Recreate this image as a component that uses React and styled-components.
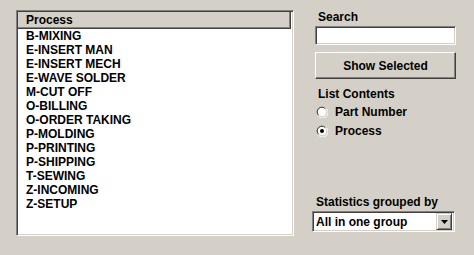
import React from "react";
import styled, { createGlobalStyle } from "styled-components";

const GlobalStyle = createGlobalStyle`
  html, body {
    margin: 0;
    padding: 0;
    background: #d4d0c8;
  }
  body {
    font-family: "Liberation Sans", Arial, sans-serif;
    font-size: 12px;
    font-weight: bold;
    color: #000;
  }
`;

const processes = [
  "B-MIXING",
  "E-INSERT MAN",
  "E-INSERT MECH",
  "E-WAVE SOLDER",
  "M-CUT OFF",
  "O-BILLING",
  "O-ORDER TAKING",
  "P-MOLDING",
  "P-PRINTING",
  "P-SHIPPING",
  "T-SEWING",
  "Z-INCOMING",
  "Z-SETUP",
];

export default function App() {
  return (
    <>
      <GlobalStyle />
      <Window>
        <ListBox>
          <ColumnHeader>Process</ColumnHeader>
          {processes.map((p) => (
            <Row key={p}>{p}</Row>
          ))}
        </ListBox>

        <Side>
          <Label $indent={6}>Search</Label>
          <TextBox />
          <Button>Show Selected</Button>

          <Label $indent={6} $top={8}>List Contents</Label>
          <RadioGroup>
            <Radio label="Part Number" />
            <Radio label="Process" checked />
          </RadioGroup>

          <Spacer />
          <Label $indent={4}>Statistics grouped by</Label>
          <Select>
            <SelectText>All in one group</SelectText>
            <ArrowButton>
              <svg width="7" height="4" viewBox="0 0 7 4">
                <path d="M0 0h7L3.5 4z" fill="#000" />
              </svg>
            </ArrowButton>
          </Select>
        </Side>
      </Window>
    </>
  );
}

function Radio({ label, checked }) {
  return (
    <RadioRow>
      <svg width="12" height="12" viewBox="0 0 12 12">
        <path d="M8 1.5A5 5 0 0 0 1.5 8" stroke="#808080" strokeWidth="1" fill="none" />
        <circle cx="6" cy="6" r="4.5" fill="#fff" />
        <path d="M9.2 2.6A4.2 4.2 0 0 0 2.6 9.2" stroke="#404040" strokeWidth="1" fill="none" />
        <path d="M2.8 10.4A5 5 0 0 0 10.4 2.8" stroke="#fff" strokeWidth="1" fill="none" />
        <path d="M3.4 9.6A4.2 4.2 0 0 0 9.6 3.4" stroke="#d4d0c8" strokeWidth="1" fill="none" />
        {checked && <circle cx="6" cy="6" r="2" fill="#000" />}
      </svg>
      <span>{label}</span>
    </RadioRow>
  );
}

// Styled Components
const Window = styled.div`
  width: 474px;
  height: 255px;
  display: flex;
  padding: 10px 0 0 16px;
  box-sizing: border-box;
  background: #d4d0c8;
  overflow: hidden;
`;

const ListBox = styled.div`
  width: 278px;
  height: 226px;
  box-sizing: border-box;
  background: #fff;
  border-top: 1px solid #808080;
  border-left: 1px solid #808080;
  border-right: 1px solid #fff;
  border-bottom: 1px solid #fff;
  box-shadow: inset 1px 1px #404040, inset -1px -1px #d4d0c8;
  padding: 1px 2px 1px 1px;
  display: flex;
  flex-direction: column;
`;

const ColumnHeader = styled.div`
  height: 17px;
  line-height: 16px;
  background: #d4d0c8;
  padding-left: 8px;
  box-shadow: inset -1px -1px #404040, inset -2px -2px #808080;
  flex-shrink: 0;
`;

const Row = styled.div`
  height: 14px;
  line-height: 14px;
  padding-left: 8px;
  white-space: nowrap;
`;

const Side = styled.div`
  margin-left: 18px;
  width: 145px;
  display: flex;
  flex-direction: column;
  padding-bottom: 23px;
`;

const Label = styled.div`
  height: 14px;
  line-height: 14px;
  margin-left: ${(p) => p.$indent || 0}px;
  margin-top: ${(p) => p.$top || 0}px;
  margin-bottom: 2px;
`;

const TextBox = styled.div`
  margin-left: 3px;
  width: 141px;
  height: 19px;
  box-sizing: border-box;
  background: #fff;
  border-top: 1px solid #808080;
  border-left: 1px solid #808080;
  border-right: 1px solid #fff;
  border-bottom: 1px solid #fff;
  box-shadow: inset 1px 1px #404040, inset -1px -1px #d4d0c8;
`;

const Button = styled.div`
  margin-left: 3px;
  margin-top: 7px;
  width: 141px;
  height: 27px;
  box-sizing: border-box;
  display: flex;
  align-items: center;
  justify-content: center;
  background: #d4d0c8;
  border-top: 1px solid #fff;
  border-left: 1px solid #fff;
  border-right: 1px solid #404040;
  border-bottom: 1px solid #404040;
  box-shadow: inset -1px -1px #808080;
`;

const RadioGroup = styled.div`
  display: flex;
  flex-direction: column;
  gap: 7px;
  margin-top: 3px;
  margin-left: 4px;
`;

const RadioRow = styled.div`
  display: flex;
  align-items: center;
  gap: 7px;
  height: 12px;
  line-height: 14px;
`;

const Spacer = styled.div`
  flex: 1;
`;

const Select = styled.div`
  width: 143px;
  height: 21px;
  box-sizing: border-box;
  display: flex;
  align-items: center;
  background: #fff;
  border-top: 1px solid #808080;
  border-left: 1px solid #808080;
  border-right: 1px solid #fff;
  border-bottom: 1px solid #fff;
  box-shadow: inset 1px 1px #404040, inset -1px -1px #d4d0c8;
  padding: 2px 2px 2px 3px;
`;

const SelectText = styled.div`
  flex: 1;
  line-height: 14px;
`;

const ArrowButton = styled.div`
  width: 16px;
  height: 17px;
  box-sizing: border-box;
  display: flex;
  align-items: center;
  justify-content: center;
  background: #d4d0c8;
  border-top: 1px solid #d4d0c8;
  border-left: 1px solid #d4d0c8;
  border-right: 1px solid #404040;
  border-bottom: 1px solid #404040;
  box-shadow: inset 1px 1px #fff, inset -1px -1px #808080;
`;
